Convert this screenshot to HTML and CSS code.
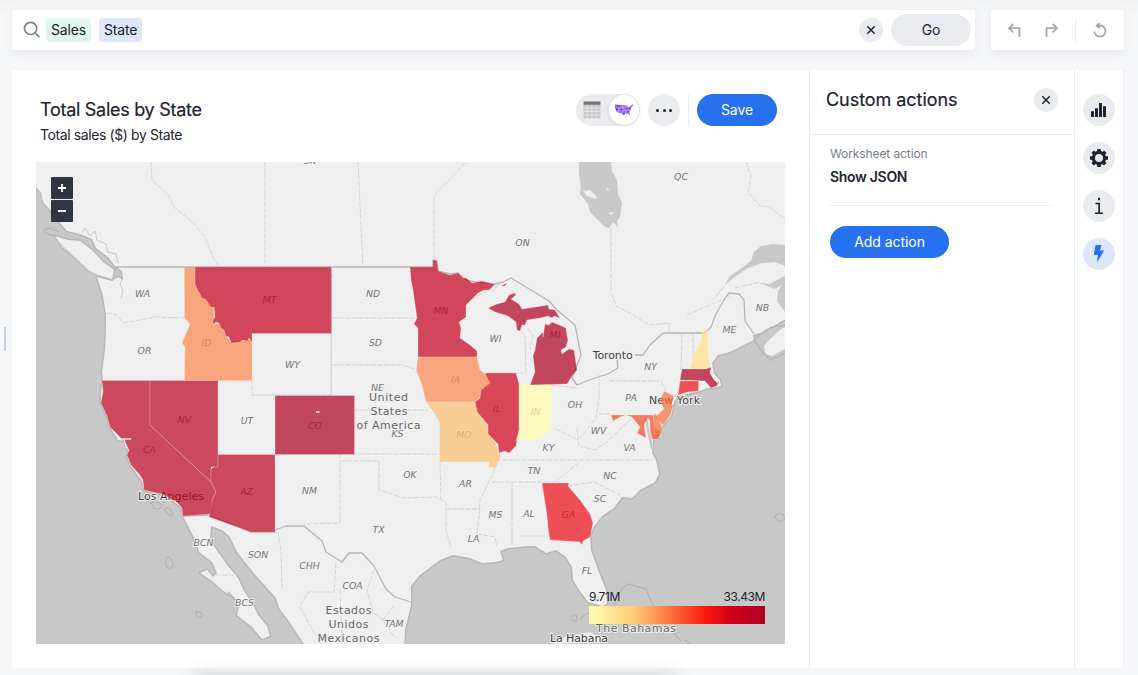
FILE: index.html
```html
<!DOCTYPE html>
<html lang="en">
<head>
<meta charset="utf-8">
<title>Total Sales by State</title>
<link rel="stylesheet" href="styles.css">
</head>
<body>
<div class="app">
  <header class="topbar">
    <div class="search">
      <svg class="search-icon" width="18" height="18" viewBox="0 0 18 18"><circle cx="7.6" cy="7.4" r="6.1"/><path d="M12 11.8 16 15.6"/></svg>
      <span class="token token-green">Sales</span>
      <span class="token token-blue">State</span>
      <button class="round clear"><svg width="10" height="10" viewBox="0 0 10 10"><path d="M1.3 1.3 8.7 8.7M8.7 1.3 1.3 8.7"/></svg></button>
      <button class="pill go">Go</button>
    </div>
    <div class="history">
      <svg width="16" height="16" viewBox="0 0 16 16"><path d="M6.3 2 2 6.200l4.300 4.200M2 6.200h10.500v8.800"/></svg>
      <svg width="16" height="16" viewBox="0 0 16 16"><path d="M9.700 2 14 6.200 9.700 10.400M14 6.200H3.500v8.800"/></svg>
      <i class="history-rule"></i>
      <svg width="16" height="16" viewBox="0 0 16 16"><path d="M2.300 9.500a5.600 5.600 0 1 0 5.700-6H4.800M7.700.8 4.900 3.500 7.700 6.400"/></svg>
    </div>
  </header>

  <main class="workspace">
    <section class="answer">
      <div class="answer-head">
        <div>
          <h1>Total Sales by State</h1>
          <p class="subtitle">Total sales ($) by State</p>
        </div>
        <div class="tools">
          <div class="switch">
            <svg class="table-icon" width="18" height="18" viewBox="0 0 18 18"><path fill="#c7c7c6" d="M.5 4h17v13.500H.5z"/><path fill="#747474" d="M.5.500h17v3.300H.5z"/><path stroke="#e9e8e5" stroke-width=".9" d="M.5 7h17M.5 10.500h17M.5 14h17M4.700 4v13.500M9 4v13.500M13.300 4v13.500"/></svg>
            <span class="knob"><svg width="20" height="14" viewBox="0 0 20 14"><path fill="#9873e6" d="M1 1.500 8 2l5 .5 1 1.500 2-.5L18.700 1l.6 1.400-1.700 1.600-.8 3-1.500 2 .8 3-.7.500-1.400-2-3.400.2-1.300 1.800-1.700-2.200-3.200-.5L2 8 .7 4z"/><path fill="#6b3fc9" d="M3 2h3v2H3zM2 5h2v2.500H2zM6 6h3v2H6zM9 10h2l-.5 2zM11 4h2v2h-2zM13 8h2v1.500h-2zM15 5h1v1h-1z"/><path stroke="#c9b6f5" stroke-width=".4" d="M4.700 2v7M8.500 2v8M1 5h12M12 3v8M3 7.500h13"/></svg></span>
          </div>
          <button class="more"><i></i><i></i><i></i></button>
          <i class="tool-rule"></i>
          <button class="pill primary save">Save</button>
        </div>
      </div>
      <div class="map">
        <svg class="map-canvas" width="749" height="482" viewBox="36 162 749 482">
          <g class="land">
            <path d="M36 150 36 187 41 193 43 202 52 212 60 223 67 231 80 234 92 239 96 248 108 257 115 266 122 271 123 280 118 277 112 281 97 277 99 283 103 296 106 314 106 330 105 350 102 372 103 381 101 390 101 403 107 416 110 427 118 440 124 441 128 450 127 456 131 466 142 481 144 490 158 493 172 500 182 508 183 516 190 530 196 541 199 552 212 562 217 573 213 577 207 570 200 573 212 581 222 590 236 599 240 603 237 615 252 627 262 639 270 636 267 626 258 615 252 603 244 591 238 578 228 566 218 552 210 540 211 526 222 530 230 537 237 552 248 566 257 577 267 588 276 598 279 608 288 620 296 632 308 650 404 650 405 630 411 605 411 596 411 586 420 575 440 560 453 555 470 558 482 563 496 562 503 560 500 551 508 548 528 546 535 546 546 553 556 550 566 557 572 567 573 580 580 591 588 602 602 606 607 604 606 590 598 570 591 550 590 535 593 528 602 516 614 508 622 497 632 498 640 490 655 482 659 474 656 460 652 453 653 440 663 425 671 416 674 402 678 396 700 391 708 388 713 388 721 386 720 380 714 374 712 363 718 355 730 352 742 346 754 340 753 335 765 332 780 322 788 318 788 150z"/>
            <path d="M55 236 68 240 80 241 92 250 103 262 114 270 112 279 100 276 88 270 76 258 62 247z"/>
          </g>
          <g class="water">
            <path d="M579 162 579 175 581 188 580 194 588 204 590 212 598 220 605 227 609 228 613 222 618 227 617 221 620 217 622 203 618 194 617 180 612 171 611 162z"/>
            <path d="M710 303 722 290 730 276 743 267 751 261 754 252 761 246 773 244 785 245 785 266 775 262 762 263 748 268 736 276 724 286z"/>
            <path d="M760 283 770 284 777 280 785 276 785 312 777 301 778 291 782 285 774 289z"/>
            <path class="coast" d="M787 325 772 327 760 334 754 340 763 353 771 360 787 352"/>
            <path d="M645 418 648 419 649 430 652 440 653 452 650 446 648 436z"/>
          </g>
          <path class="isle" d="M583 191 590 190 597 197 596 199 587 196zM608 213 614 212 612 215zM606 188l3 1-1 2z"/>
          <path class="isle" d="M788 325 780 330 770 339 764 346 766 354 772 356 788 347zM553 644 565 637 590 632 606 642z"/>
          <g class="shore">
            <path d="M54 236q-14-5-9-7t14 3M236 600l-8-8M166 558q3-3 6 3t-1 7-5-2zM196 612q5-1 6 3t-5 2zM151 503q5-3 11 2-2 6-8 3zM164 510q5-5 8 2t-5 1zM775 517q3-6 8-2t-4 7zM571 617q5-5 6 1t-6 1M614 606q3-15 14-22l18 5 10 24 25 28M580 620q5-9 20-7M685 640l5 4"/>
            <path class="inlet" d="M117 268l6 10-3 6 3 6-2 9M56 240 66 249 78 261 91 273 114 280M38 190 44 205 57 221M82 233l3-5 5 8 5-5 2 9 9 4 2 8 8 2 2 9"/>
          </g>
          <g class="country">
            <path d="M116 267H433V260L437 261 438 271 450 274 458 273 466 280 475 282 495 284 503 282 511 278 536 293 549 301 557 310 575 325 581 355 572 378 577 385 592 379 608 374 618 368 617 360M635 355 643 355 650 345 663 333 705 333 711 327 716 314 724 300 729 293 739 294 744 300 745 321 754 334"/>
            <path d="M183 516 209 515 251 532H275V530L286 526 304 526 322 541 326 552 342 562 349 553 362 553 374 566 386 589 395 597 411 602"/>
          </g>
          <g class="borders">
            <path d="M151 162 152 180 169 196 174 207 190 220 205 237 213 257 219 267M265 162V267M358 162 363 267M434 260V196L466 162M611 228V293L617 307 630 313 649 325 669 323V333M746 162 751 176 748 192 760 206 769 207 785 219"/>
            <path d="M107 313 115 314 124 323 155 317 184 318M218 381H252V395H331V334M331.500 267V395M332 318H416M332 365H402L415 369M354 410H428M354 454H440M252 395H275M275 454H340V523L304 524M340 461H379V490L404 498 436 497 446 502M440 462 441 500M446 502V530L451 548M446 509H479M479 509 480 500 496 467M480 509 477 534M477 534 495 537 497 546M492 482H560M512 482V545M520 536H548M488 373H523M519 386V430M551 385 578 388M599 375V398L596 418 588 428 578 440 554 428M599 414H611M609 381H661L667 392M577 428 579 446 595 450 606 443 622 427 634 417M495 460H653M555 482 582 460M568 486 594 482 620 495M682 333 681 370M693 369V333M492 292 500 283M466 302 498 285M520 330 525 337 526 375M528 329 533 336 530 350"/>
            <path d="M278 532 281 550 282 590M336 563 334 592 308 592 300 607M374 570 367 590 373 612 383 620M394 606 383 620 395 638M300 607 316 636M340 590 342 644M216 575H235M687 315 730 296M735 288 760 282"/>
          </g>
          <g class="codes">
            <text x="142.500" y="297">WA</text><text x="144.500" y="353.500">OR</text><text x="269.500" y="303">MT</text><text x="206.500" y="345.500">ID</text>
            <text x="373" y="297">ND</text><text x="375.500" y="346">SD</text><text x="292.500" y="368">WY</text><text x="377.500" y="391">NE</text>
            <text x="441" y="314">MN</text><text x="495.500" y="342">WI</text><text x="555" y="337.500">MI</text><text x="455.500" y="383">IA</text>
            <text x="247" y="424">UT</text><text x="184.500" y="423">NV</text><text x="149.500" y="452.500">CA</text><text x="246.500" y="495">AZ</text>
            <text x="315" y="428.500">CO</text><text x="397.500" y="437">KS</text><text x="464" y="438">MO</text><text x="497" y="412">IL</text>
            <text x="535.500" y="415">IN</text><text x="575" y="408">OH</text><text x="598.500" y="434">WV</text><text x="548.500" y="450.500">KY</text>
            <text x="629.500" y="451">VA</text><text x="534" y="474">TN</text><text x="610" y="479">NC</text><text x="600" y="501.500">SC</text>
            <text x="568.500" y="518">GA</text><text x="529" y="517">AL</text><text x="495.500" y="517.500">MS</text><text x="465.500" y="487">AR</text>
            <text x="473.500" y="541.500">LA</text><text x="410" y="478">OK</text><text x="309.500" y="493.500">NM</text><text x="378.500" y="533">TX</text>
            <text x="587" y="573.500">FL</text><text x="650.500" y="370">NY</text><text x="631" y="401">PA</text><text x="729.500" y="332.500">ME</text>
            <text x="762.500" y="311">NB</text><text x="681" y="179.500">QC</text><text x="522.500" y="245.500">ON</text><text x="203.500" y="545.500">BCN</text>
            <text x="258" y="557.500">SON</text><text x="244.500" y="606">BCS</text><text x="309.500" y="569">CHH</text><text x="352.500" y="588.500">COA</text>
            <text x="394" y="626.500">TAM</text><text x="310" y="163.500">SK</text>
          </g>
          <g class="nations">
            <text x="388.500" y="401.300" textLength="39">United</text><text x="389" y="415" textLength="37">States</text><text x="388.500" y="428.500" textLength="64">of America</text>
            <text x="348.500" y="614.300" textLength="46">Estados</text><text x="348.500" y="628" textLength="40">Unidos</text><text x="348.500" y="641.700" textLength="62">Mexicanos</text>
            <text x="636" y="632" textLength="80">The Bahamas</text>
          </g>
          <g class="cities">
            <text x="612.700" y="359" textLength="40">Toronto</text><text x="674.500" y="404" textLength="51">New York</text>
            <text x="171" y="499.500" textLength="66">Los Angeles</text><text x="579" y="641.500" textLength="58">La Habana</text>
          </g>
          <g class="states">
            <path fill="#fc874d" d="M184.300 267H195V284L200 294 208 303 214 307 214 318 213 325 219 323 224 330 230 342 243 341 247 338 252 341V380.500H184.500L185 347 182 343 190 324 184.500 318z"/>
            <path fill="#c6001c" d="M195 267H331.500V333.500H252V342L249 338 247 341 243 340 240 342 231 343 229 337 226 336 224 330 221 328 219 323 216 322 213 325 213 320 215 317 214 307 211 307 208 303 205 299 202 298 200 294 198 291 195 284z"/>
            <path fill="#be0320" d="M102 380.500H150V425L211 482 216 492 212 500 213 508 211 514 183 516 182 508 176 501 172 500 165 495 158 493 144 490 143 480 139 474 131 465 127 455 129 450 126 445 121 438 110 427 107 416 101 403 103 391z"/>
            <path fill="#be0320" d="M150 380.500H218V467L211 467V482L150 425z"/>
            <path fill="#be0320" d="M218 454.500H275V532H251L209 517 212 508 212 500 216 492 211 482 211 469 214 467 218 467z"/>
            <path fill="#b00022" d="M275 395.500H354.500V454.500H275z"/>
            <path fill="#c6001c" d="M410 267H433V260L437 261 438 271 444 273 450 275 458 273 463 278 466 278 472 283 482 281 495 284.500 489 290 484 290 478 293 466 305V317L459 322 461 328 460 338 470 345 477 351V357H418V328L414 324 417 318 415 304 413 290 411 280z"/>
            <path fill="#fc874d" d="M418 357H477L480 370 488 376 490 383 481 391 480 397 475 402H426L422 385 416 370z"/>
            <path fill="#cf0019" d="M485 373H516L519 384V430L516 446 509 453 505 451 499 453 498 444 495 441 488 434V425L477 412 475 402 480 398 481 390 490 383z"/>
            <path fill="#fdc171" d="M426 402H475L477 412 488 425V434L495 441 499 452 501 457 496 468 488 467 490 462H439.500V422L434 413z"/>
            <path fill="#ffffac" d="M519 384H551V429L544 435 541 440 538 438 534 441 528 440 516 441 519 430z"/>
            <path fill="#b00022" d="M488 308 497 304 505 302 509 295 515 293 516 295 511 299 519 304 522 309 536 307 548 305 549 309 555 310 560 318 554 316 552 318 548 316 540 318 533 319 527 320 525 325 522 325 520 331 517 330 516 322 508 316 495 312zM530 385 535 372 533 356 535 350 537 338 543 332 543 337 545 324 549 325 552 322 566 328 567 336 568 340 566 347 561 350 562 354 569 349 574 350 577 370 572 376 567 384zM501 286l6-3 1-1-3 4z"/>
            <path fill="#ee0c13" d="M542 483H569L568 486 580 500 590 514 593 523 590 537 583 541 582 545 580 542 550 540 548 527 547 515z"/>
            <path fill="#ffe18a" d="M705 329 708 331 708 350 710 366 707 369 690 370 694 353 701 341 702 333z"/>
            <path fill="#b00022" d="M682 369H706L711 367 710 373 714 380 719 384 719 380 717 386 711 388 705 381 680 380z"/>
            <path fill="#ee0c13" d="M680 381H698.500V391L688 392 678 395z"/>
            <path fill="#fc6e3a" d="M664 391 674 396 672 403 673 406 670 416 663 425 655 417 664 409 660 401z"/>
            <path fill="#f74827" d="M611 415H653L655 428 661 433 658 439 652 439 650 430 650 421 648 418 644 425 646 438 637 433 640 427 632 417 626 415 620 417 613 421z"/>
            <path fill="#fc6e3a" d="M653 415 656 414 661 424 662 433 655 434z"/>
          </g>
          <path class="bay" d="M122 439h9M124 440l3 8M316 412h3.500"/>
        </svg>
        <div class="zoom"><button><svg width="10" height="10" viewBox="0 0 10 10"><path d="M1 5h8M5 1v8"/></svg></button><button><svg width="10" height="10" viewBox="0 0 10 10"><path d="M1 5h8"/></svg></button></div>
        <div class="legend">
          <div class="legend-labels"><span>9.71M</span><span>33.43M</span></div>
          <div class="legend-bar"></div>
        </div>
      </div>
    </section>

    <aside class="panel">
      <div class="panel-head"><h2>Custom actions</h2><button class="round"><svg width="10" height="10" viewBox="0 0 10 10"><path d="M1.300 1.300 8.700 8.700M8.700 1.300 1.300 8.700"/></svg></button></div>
      <div class="panel-body">
        <p class="kind">Worksheet action</p>
        <p class="action-name">Show JSON</p>
        <button class="pill primary add">Add action</button>
      </div>
    </aside>

    <nav class="rail">
      <button><svg width="18" height="18" viewBox="0 0 18 18"><path d="M1 10.200h3V16H1zM5 7.200h3V16H5zM9 2h3v14H9zM13 5.200h3V16h-3z"/></svg></button>
      <button><svg width="20" height="20" viewBox="0 0 20 20"><circle cx="10" cy="10" r="5.600" fill="none" stroke="#1d232f" stroke-width="3.200"/><path stroke="#1d232f" stroke-width="3.600" d="M10 1v3M10 16v3M1 10h3M16 10h3M3.700 3.700l2 2M14.300 14.300l2 2M3.700 16.300l2-2M14.300 5.700l2-2"/></svg></button>
      <button><svg width="12" height="18" viewBox="0 0 12 18"><path d="M5 .8h2v2.400H5zM2.500 5.700h4.500v9.900H10V17H2v-1.400h3.300V7.200H2.500z"/></svg></button>
      <button class="active"><svg width="14" height="20" viewBox="0 0 14 20"><path d="M3.500 1h6L8 6.500h4.300L4.800 18.500 6 11H1.700z"/></svg></button>
    </nav>
  </main>
  <i class="drag-handle"></i>
  <i class="dock-shadow"></i>
</div>
</body>
</html>
```
FILE: styles.css
```css
* { box-sizing: border-box; }
body { margin: 0; font-family: Inter, "Liberation Sans", sans-serif; color: #1d232f; }
h1, h2, p { margin: 0; font-weight: 400; }
button { border: 0; padding: 0; font: inherit; color: inherit; display: flex; align-items: center; justify-content: center; }
svg { display: block; flex: none; }

.app {
  position: relative;
  width: 1138px;
  height: 675px;
  overflow: hidden;
  padding: 10px 14px 7px 12px;
  display: flex;
  flex-direction: column;
  gap: 20px;
  background: linear-gradient(#f0f1f3, #f6f7f9 14px);
}

.topbar { display: flex; gap: 16px; height: 40px; flex: none; }
.search { width: 963px; display: flex; align-items: center; padding: 0 4px 0 11px; background: #fff; border-radius: 2px; box-shadow: 0 3px 8px rgba(25, 35, 49, .08); }
.search-icon { fill: none; stroke: #7c8392; stroke-width: 1.7; stroke-linecap: round; margin-right: 5px; }
.token { height: 24px; line-height: 24px; padding: 0 5px; border-radius: 4px; font-size: 14px; letter-spacing: -.15px; margin-right: 8px; }
.token-green { background: #e1f7ed; width: 45px; }
.token-blue { background: #dce8f9; width: 43px; }
.round { width: 24px; height: 24px; border-radius: 50%; background: #eaebef; }
.round svg { fill: none; stroke: #1d232f; stroke-width: 1.5; }
.clear { margin: 0 8px 0 auto; }
.pill { height: 32px; border-radius: 16px; font-size: 14px; letter-spacing: -.05px; padding-bottom: 2px; }
.go { width: 80px; background: #eaebef; }
.history { width: 133px; flex: none; display: flex; align-items: center; justify-content: space-between; padding: 0 16px 0 16px; background: #fff; border-radius: 2px; box-shadow: 0 3px 8px rgba(25, 35, 49, .08); }
.history svg { fill: none; stroke: #a5a8ae; stroke-width: 1.8; }
.history svg:nth-child(2) { margin-left: 4px; }
.history-rule { width: 1px; height: 24px; margin-left: 1px; background: #eaedf2; }

.workspace { display: flex; height: 598px; width: 1112px; background: #fff; border-right: 1px solid #eaedf2; }
.answer { width: 797px; padding: 24px 24px 0; }
.answer-head { display: flex; justify-content: space-between; height: 68px; padding: 0 8px 0 4px; }
.answer-head h1 { font-size: 18px; line-height: 24px; padding-top: 4px; letter-spacing: -.28px; -webkit-text-stroke: .2px; }
.subtitle { font-size: 14px; line-height: 18px; padding-top: 4px; letter-spacing: -.4px; }
.tools { display: flex; height: 32px; }
.switch { width: 64px; display: flex; align-items: center; justify-content: space-between; padding: 0 1px 0 7px; background: #eaebef; border-radius: 16px; }
.knob { width: 30px; height: 30px; border-radius: 50%; background: #fff; display: flex; align-items: center; justify-content: center; box-shadow: 0 1px 4px rgba(25, 35, 49, .1); }
.more { width: 32px; margin-left: 8px; border-radius: 50%; background: #eaebef; gap: 3.5px; }
.more i { width: 3px; height: 3px; border-radius: 50%; background: #1d232f; }
.tool-rule { width: 1px; margin: 0 8px; background: #eaedf2; }
.primary { background: #2770ef; color: #fff; }
.save { width: 80px; }

.map { position: relative; width: 749px; height: 482px; background: #c8c8c8; }
.land path { fill: #efefef; stroke: #b7b7b7; stroke-width: 3; stroke-linejoin: round; paint-order: stroke; }
.water path { fill: #c8c8c8; }
.water .coast { stroke: #b4b4b4; stroke-width: 1.5; }
.isle { fill: #efefef; }
.shore path { fill: none; stroke: #b2b2b2; stroke-width: 1.2; }
.shore .inlet { stroke: #c6c6c6; stroke-width: 1; }
.country path { fill: none; stroke: #b5b5b5; stroke-width: 1.3; stroke-linejoin: round; }
.borders path { fill: none; stroke: #cfcfcf; stroke-width: .9; stroke-dasharray: 5 1.5; }
.map-canvas text { font-family: "DejaVu Sans", sans-serif; text-anchor: middle; paint-order: stroke; stroke: #efefef; stroke-width: 1.8px; }
.codes { font-size: 9.3px; font-style: oblique; fill: #757575; }
.nations { font-size: 11px; fill: #666; }
.cities { font-size: 11px; fill: #3f3f3f; }
.cities text, .nations text { lengthAdjust: spacing; }
.states path { opacity: .7; stroke: #fff; stroke-opacity: .35; stroke-width: .7; }
.bay { stroke: #efefef; stroke-width: 1.3; fill: none; }
.zoom { position: absolute; left: 15px; top: 15px; display: grid; gap: 1px; }
.zoom button { width: 22px; height: 22px; background: #30353f; border-radius: 1px; }
.zoom svg { stroke: #fff; stroke-width: 1.8; }
.legend { position: absolute; left: 553px; top: 426px; width: 176px; }
.legend-labels { display: flex; justify-content: space-between; font-size: 12px; line-height: 17px; letter-spacing: -.4px; }
.legend-bar { height: 18px; margin-top: 1px; background: linear-gradient(90deg, #ffffb2, #fecc78 25%, #fd8d50 40%, #fa160c 67%, #d50018 80%, #b00026); }

.panel { width: 265px; border-left: 1px solid #eaedf2; }
.panel-head { display: flex; align-items: center; justify-content: space-between; height: 65px; padding: 0 16px 4px 16px; border-bottom: 1px solid #eaedf2; }
.panel-head h2 { font-size: 18px; padding-bottom: 2px; letter-spacing: -.05px; -webkit-text-stroke: .2px; }
.panel-body { padding: 10px 20px 0; }
.kind { font-size: 12px; line-height: 17px; color: #777e8b; letter-spacing: -.1px; }
.action-name { font-size: 14px; line-height: 20px; font-weight: 600; letter-spacing: -.3px; padding: 5px 0 18px; border-bottom: 1px solid #eaedf2; margin-bottom: 20px; }
.add { width: 119px; }

.rail { flex: 1; border-left: 1px solid #eaedf2; padding: 24px 0 0 8px; display: flex; flex-direction: column; gap: 16px; }
.rail button { width: 32px; height: 32px; border-radius: 50%; background: #eaebef; }
.rail svg { fill: #1d232f; }
.rail .active { background: #dce8f9; }
.rail .active svg { fill: #2770ef; }

.drag-handle { position: absolute; left: 4px; top: 327px; width: 2px; height: 24px; background: #c9d1df; }
.dock-shadow { position: absolute; left: 195px; top: 678px; width: 480px; height: 20px; box-shadow: 0 0 20px 1px rgba(0, 0, 0, .22); }
```
